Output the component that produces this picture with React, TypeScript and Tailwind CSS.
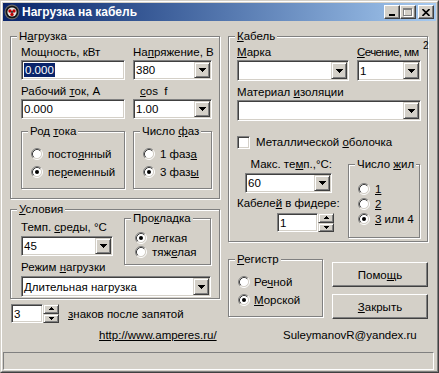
import React from "react";

const sunken =
  "border border-t-[#808080] border-l-[#808080] border-b-white border-r-white shadow-[inset_1px_1px_0_#404040,inset_-1px_-1px_0_#d4d0c8]";
const raised =
  "border border-t-[#d4d0c8] border-l-[#d4d0c8] border-b-[#404040] border-r-[#404040] shadow-[inset_1px_1px_0_#fff,inset_-1px_-1px_0_#808080] bg-[#d4d0c8]";
const pushBtn =
  "border border-t-white border-l-white border-b-[#404040] border-r-[#404040] shadow-[inset_-1px_-1px_0_#808080] bg-[#d4d0c8]";
const etched = "border border-[#808080] shadow-[inset_1px_1px_0_#fff,1px_1px_0_#fff]";

function DownArrow() {
  return (
    <svg width="7" height="4" viewBox="0 0 7 4" shapeRendering="crispEdges">
      <rect x="0" y="0" width="7" height="1" fill="#000" />
      <rect x="1" y="1" width="5" height="1" fill="#000" />
      <rect x="2" y="2" width="3" height="1" fill="#000" />
      <rect x="3" y="3" width="1" height="1" fill="#000" />
    </svg>
  );
}

function SmallArrow({ up }: { up?: boolean }) {
  return (
    <svg width="5" height="3" viewBox="0 0 5 3" shapeRendering="crispEdges">
      {up ? (
        <>
          <rect x="2" y="0" width="1" height="1" fill="#000" />
          <rect x="1" y="1" width="3" height="1" fill="#000" />
          <rect x="0" y="2" width="5" height="1" fill="#000" />
        </>
      ) : (
        <>
          <rect x="0" y="0" width="5" height="1" fill="#000" />
          <rect x="1" y="1" width="3" height="1" fill="#000" />
          <rect x="2" y="2" width="1" height="1" fill="#000" />
        </>
      )}
    </svg>
  );
}

function Radio({ checked }: { checked?: boolean }) {
  return (
    <svg width="12" height="12" viewBox="0 0 12 12" className="shrink-0">
      <circle cx="6" cy="6" r="4.5" fill="#fff" />
      <path d="M2.11 9.89 A5.5 5.5 0 0 1 9.89 2.11" stroke="#808080" fill="none" />
      <path d="M9.89 2.11 A5.5 5.5 0 0 1 2.11 9.89" stroke="#fff" fill="none" />
      <path d="M2.82 9.18 A4.5 4.5 0 0 1 9.18 2.82" stroke="#404040" fill="none" />
      <path d="M9.18 2.82 A4.5 4.5 0 0 1 2.82 9.18" stroke="#d4d0c8" fill="none" />
      {checked && <circle cx="6" cy="6" r="2" fill="#000" />}
    </svg>
  );
}

function RadioRow({
  checked,
  children,
  className = "h-[18px]",
  gap = "gap-[5px]",
}: {
  checked?: boolean;
  children: React.ReactNode;
  className?: string;
  gap?: string;
}) {
  return (
    <div className={`flex items-center ${gap} ${className}`}>
      <Radio checked={checked} />
      <span className="leading-[14px] whitespace-nowrap">{children}</span>
    </div>
  );
}

function Group({
  label,
  className,
  children,
}: {
  label: React.ReactNode;
  className: string;
  children?: React.ReactNode;
}) {
  return (
    <div className={`relative ${etched} ${className}`}>
      <span className="absolute -top-[8px] left-[6px] px-[2px] bg-[#d4d0c8] leading-[14px] whitespace-nowrap">
        {label}
      </span>
      {children}
    </div>
  );
}

function Combo({ className, value }: { className: string; value?: React.ReactNode }) {
  return (
    <div className={`${sunken} bg-white flex items-stretch ${className}`}>
      <div className="flex-1 pl-[2px] flex items-center leading-[14px] overflow-hidden whitespace-nowrap">
        {value}
      </div>
      <div className={`${raised} w-[16px] m-[1px] flex items-center justify-center`}>
        <DownArrow />
      </div>
    </div>
  );
}

function Edit({ className, children }: { className: string; children?: React.ReactNode }) {
  return (
    <div className={`${sunken} bg-white flex items-center pl-[2px] leading-[14px] ${className}`}>
      {children}
    </div>
  );
}

function Spin({ editW, value }: { editW: string; value: string }) {
  return (
    <div className="flex h-[19px]">
      <Edit className={`${editW} h-full`}>{value}</Edit>
      <div className="flex flex-col w-[16px] h-full">
        <div className={`${raised} flex-1 flex items-center justify-center`}>
          <SmallArrow up />
        </div>
        <div className={`${raised} flex-1 flex items-center justify-center`}>
          <SmallArrow />
        </div>
      </div>
    </div>
  );
}

function Label({ children, className = "" }: { children: React.ReactNode; className?: string }) {
  return <div className={`h-[14px] leading-[14px] whitespace-nowrap ${className}`}>{children}</div>;
}

function TitleIcon() {
  return (
    <svg width="16" height="16" viewBox="0 0 16 16">
      <circle cx="8" cy="8" r="7.5" fill="#6a6a6a" />
      <circle cx="8" cy="8" r="6.3" fill="#151515" />
      <circle cx="8" cy="8" r="4.6" fill="#e6e6e6" />
      <circle cx="6" cy="7" r="1.7" fill="#c00000" />
      <circle cx="10" cy="7" r="1.7" fill="#c00000" />
      <circle cx="8" cy="10.4" r="1.7" fill="#c00000" />
      <circle cx="8" cy="8" r="0.9" fill="#151515" />
    </svg>
  );
}

function CaptionBtn({ children, className = "" }: { children: React.ReactNode; className?: string }) {
  return (
    <div className={`${pushBtn} w-[16px] h-[14px] flex items-center justify-center ${className}`}>
      {children}
    </div>
  );
}

export default function App() {
  return (
    <div className="w-[439px] h-[373px] font-['Liberation_Sans',Arial,sans-serif] text-[11.5px] text-black bg-[#d4d0c8]">
      <div className="w-full h-full border border-t-[#d4d0c8] border-l-[#d4d0c8] border-b-[#404040] border-r-[#404040]">
        <div className="w-full h-full border border-t-white border-l-white border-b-[#808080] border-r-[#808080] p-[1px] flex flex-col">
          {/* Title bar */}
          <div className="h-[18px] shrink-0 bg-linear-to-r from-[#0a246a] to-[#a6caf0] flex items-center">
            <div className="ml-[1px]">
              <TitleIcon />
            </div>
            <span className="ml-[2px] text-white font-bold text-[12px] leading-[14px] whitespace-nowrap">
              Нагрузка на кабель
            </span>
            <div className="ml-auto mr-[2px] flex items-center">
              <CaptionBtn>
                <svg width="8" height="8" viewBox="0 0 8 8" shapeRendering="crispEdges">
                  <rect x="1" y="6" width="6" height="2" fill="#000" />
                </svg>
              </CaptionBtn>
              <CaptionBtn>
                <svg width="10" height="9" viewBox="0 0 10 9" shapeRendering="crispEdges">
                  <rect x="1.5" y="1.5" width="8" height="7" fill="none" stroke="#fff" />
                  <rect x="0.5" y="0.5" width="8" height="7" fill="none" stroke="#808080" />
                  <rect x="0" y="1" width="9" height="1" fill="#808080" />
                </svg>
              </CaptionBtn>
              <CaptionBtn className="ml-[2px]">
                <svg width="8" height="7" viewBox="0 0 8 7">
                  <path d="M0.5 0 L7.5 7 M7.5 0 L0.5 7" stroke="#000" strokeWidth="1.6" />
                </svg>
              </CaptionBtn>
            </div>
          </div>

          {/* Main */}
          <div className="flex pl-[7px] pt-[15px]">
            {/* Left column */}
            <div className="w-[210px] flex flex-col">
              <Group
                label={<>Н<u>а</u>грузка</>}
                className="h-[163px] pl-[10px] pt-[8px]"
              >
                <div className="flex gap-[8px]">
                  <div className="w-[104px] flex flex-col">
                    <Label>Мощность, кВт</Label>
                    <Edit className="mt-[1px] h-[20px]">
                      <span className="bg-[#0a246a] text-white px-[1px]">0.000</span>
                    </Edit>
                    <Label className="mt-[4px]">
                      Рабочий <u>т</u>ок, А
                    </Label>
                    <Edit className="mt-[1px] h-[20px]">0.000</Edit>
                  </div>
                  <div className="w-[79px] flex flex-col">
                    <Label>
                      На<u>п</u>ряжение, В
                    </Label>
                    <Combo className="mt-[1px] h-[20px]" value="380" />
                    <Label className="mt-[4px] pl-[7px]">
                      <u>c</u>os&nbsp; f
                    </Label>
                    <Combo className="mt-[1px] h-[20px]" value="1.00" />
                  </div>
                </div>
                <div className="flex gap-[8px] mt-[12px]">
                  <Group
                    label={<>Род <u>т</u>ока</>}
                    className="w-[104px] h-[58px] pl-[9px] pt-[13px]"
                  >
                    <RadioRow>
                      посто<u>я</u>нный
                    </RadioRow>
                    <RadioRow checked>
                      пе<u>р</u>еменный
                    </RadioRow>
                  </Group>
                  <Group
                    label={<>Число <u>ф</u>аз</>}
                    className="w-[79px] h-[58px] pl-[9px] pt-[13px]"
                  >
                    <RadioRow>
                      1 фаз<u>а</u>
                    </RadioRow>
                    <RadioRow checked>
                      3 фаз<u>ы</u>
                    </RadioRow>
                  </Group>
                </div>
              </Group>

              <Group
                label={<><u>У</u>словия</>}
                className="mt-[10px] h-[90px] pl-[10px] pt-[10px]"
              >
                <div className="flex items-start">
                  <div className="w-[92px] flex flex-col">
                    <Label>
                      Темп. <u>с</u>реды, °C
                    </Label>
                    <Combo className="mt-[2px] h-[20px]" value="45" />
                    <Label className="mt-[4px]">
                      Режим <u>н</u>агрузки
                    </Label>
                  </div>
                  <Group
                    label={<>Про<u>к</u>ладка</>}
                    className="ml-[11px] -mt-[2px] w-[87px] h-[47px] pl-[10px] pt-[12px]"
                  >
                    <RadioRow checked className="h-[14px]">
                      легкая
                    </RadioRow>
                    <RadioRow className="h-[14px]">
                      тяж<u>е</u>лая
                    </RadioRow>
                  </Group>
                </div>
                <Combo className="mt-[2px] h-[21px] w-[190px]" value="Длительная нагрузка" />
              </Group>

              <div className="mt-[5px] ml-[1px] flex items-center">
                <Spin editW="w-[32px]" value="3" />
                <span className="ml-[9px] leading-[14px] whitespace-nowrap">
                  <u>з</u>наков после запятой
                </span>
              </div>
            </div>

            {/* Right column */}
            <div className="ml-[8px] w-[200px] flex flex-col">
              <Group
                label={<><u>К</u>абель</>}
                className="h-[206px] pl-[8px] pt-[8px]"
              >
                <div className="flex">
                  <div className="w-[112px] flex flex-col">
                    <Label>
                      <u>М</u>арка
                    </Label>
                    <Combo className="mt-[1px] h-[21px]" />
                  </div>
                  <div className="ml-[8px] w-[64px] flex flex-col">
                    <Label className="relative tracking-[-0.6px]">
                      <u>С</u>ечение, мм
                      <span className="absolute left-[66px] -top-[6px] text-[10px] tracking-normal">2</span>
                    </Label>
                    <Combo className="mt-[1px] h-[21px]" value="1" />
                  </div>
                </div>
                <Label className="mt-[4px]">
                  Материал <u>и</u>золяции
                </Label>
                <Combo className="mt-[1px] h-[21px] w-[184px]" />
                <div className="mt-[14px] flex items-center h-[14px]">
                  <div className={`${sunken} bg-white w-[13px] h-[13px]`} />
                  <span className="ml-[6px] leading-[14px] whitespace-nowrap">
                    Металлической <u>о</u>болочка
                  </span>
                </div>
                <div className="mt-[8px] flex items-start">
                  <div className="w-[98px] flex flex-col">
                    <Label className="text-right pr-[3px]">
                      Макс. те<u>м</u>п.,°C:
                    </Label>
                    <Combo className="mt-[2px] ml-[8px] w-[87px] h-[20px]" value="60" />
                    <Label className="mt-[3px] text-right pr-[1px]">
                      Кабеле<u>й</u> в фидере:
                    </Label>
                    <div className="mt-[3px] ml-[40px]">
                      <Spin editW="w-[41px]" value="1" />
                    </div>
                  </div>
                  <Group
                    label={<>Число <u>ж</u>ил</>}
                    className="ml-[13px] mt-[7px] w-[72px] h-[74px] pl-[9px] pt-[16px]"
                  >
                    <RadioRow className="h-[15px]">
                      <u>1</u>
                    </RadioRow>
                    <RadioRow className="h-[15px]">
                      <u>2</u>
                    </RadioRow>
                    <RadioRow checked className="h-[15px]">
                      <u>3</u> или 4
                    </RadioRow>
                  </Group>
                </div>
              </Group>

              <div className="mt-[17px] flex items-start">
                <Group
                  label={<><u>Р</u>егистр</>}
                  className="w-[95px] h-[58px] pl-[9px] pt-[13px]"
                >
                  <RadioRow gap="gap-[4px]">
                    Ре<u>ч</u>ной
                  </RadioRow>
                  <RadioRow checked gap="gap-[4px]">
                    <u>М</u>орской
                  </RadioRow>
                </Group>
                <div className="ml-[9px] mt-[3px] flex flex-col gap-[7px]">
                  <div className={`${pushBtn} w-[96px] h-[25px] flex items-center justify-center leading-[14px]`}>
                    Помо<u>щ</u>ь
                  </div>
                  <div className={`${pushBtn} w-[96px] h-[25px] flex items-center justify-center leading-[14px]`}>
                    <u>З</u>акрыть
                  </div>
                </div>
              </div>
            </div>
          </div>

          {/* Bottom text row */}
          <div className="mt-[5px] flex h-[14px] leading-[14px]">
            <div className="w-[280px] pl-[96px]">
              <u>http://www.amperes.ru/</u>
            </div>
            <div>SuleymanovR@yandex.ru</div>
          </div>

          {/* Status bar */}
          <div className="mt-[10px] h-[18px] w-[431px] border border-t-[#808080] border-l-[#808080] border-b-white border-r-white" />
        </div>
      </div>
    </div>
  );
}
